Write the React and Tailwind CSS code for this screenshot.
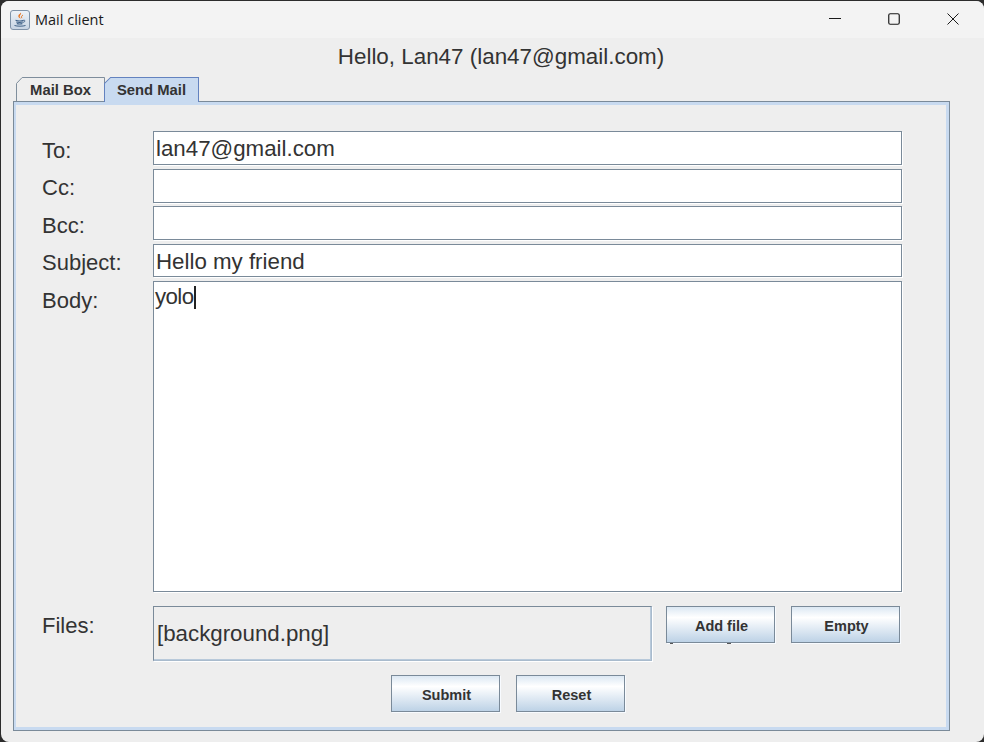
const textFont = "font-['Liberation_Sans',Arial,sans-serif]";

function JavaIcon() {
  return (
    <svg width="20" height="20" viewBox="0 0 20 20" className="shrink-0">
      <defs>
        <linearGradient id="tile" x1="0" y1="0" x2="0" y2="1">
          <stop offset="0" stopColor="#eef3f8" />
          <stop offset="1" stopColor="#c6d4e3" />
        </linearGradient>
      </defs>
      <rect x="0.5" y="0.5" width="19" height="19" rx="2.5" fill="url(#tile)" stroke="#7f93a8" />
      <path d="M10.8 2.500c1.300 1.800-1.700 2.800-.9 4.700.2.600.8 1.100 1.100 1.500-2.200-.8-3.200-2.100-2.500-3.500.5-1 2-1.500 2.300-2.700z" fill="#e8741f" />
      <path d="M13 5c-1.300.8-1.900 1.600-1.200 3.200" fill="none" stroke="#e8741f" strokeWidth="1" />
      <path d="M5.500 10.200c2 .7 6.500.7 8.300 0M6.200 12c1.800.5 5 .5 6.800 0M6.800 13.600c1.600.4 4.200.4 5.600 0" fill="none" stroke="#3f6288" strokeWidth="1.100" />
      <path d="M13.800 10.300c1.500-.3 1.700 1.500-.6 2M4.500 15.500c2.500.9 8.500.9 11 0" fill="none" stroke="#3f6288" strokeWidth="1" />
    </svg>
  );
}

function WindowButtons() {
  return (
    <div className="flex items-center mr-[2px] mb-[1px]">
      <div className="w-[59px] h-[36px] flex items-center justify-center">
        <svg width="12" height="12" viewBox="0 0 12 12"><path d="M0 5.500h12" stroke="#1a1a1a" strokeWidth="1" /></svg>
      </div>
      <div className="w-[59px] h-[36px] flex items-center justify-center">
        <svg width="12" height="12" viewBox="0 0 12 12"><rect x="0.750" y="0.750" width="10.500" height="10.500" rx="1.500" fill="none" stroke="#1a1a1a" strokeWidth="1.200" /></svg>
      </div>
      <div className="w-[59px] h-[36px] flex items-center justify-center">
        <svg width="12" height="12" viewBox="0 0 12 12"><path d="M0.500 0.500l11 11M11.500 0.500l-11 11" stroke="#1a1a1a" strokeWidth="1" /></svg>
      </div>
    </div>
  );
}

function Tab({ label, active, width }) {
  const fill = active ? "#c8daf0" : "#eeeeee";
  const stroke = active ? "#6382bf" : "#7a8a99";
  return (
    <div className={`relative h-[25px] flex items-center justify-center ${active ? "z-10 -ml-[1px]" : ""} ${width}`}>
      <svg className="absolute inset-0" width="100%" height="25" preserveAspectRatio="none" viewBox="0 0 94 25">
        <path d="M0.500 25V6.500L6.500 0.500H93.500V25" fill={fill} stroke={stroke} strokeWidth="1" />
      </svg>
      <span className={`relative text-[14.800px] font-bold text-[#333333] leading-none pt-[2px] ${textFont}`}>{label}</span>
    </div>
  );
}

function Field({ label, value, rowClass, labelClass, children }) {
  return (
    <div className={`flex ${rowClass}`}>
      <div className={`w-[112px] shrink-0 text-[#333333] text-[22px] leading-[38px] pl-[1px] ${labelClass}`}>{label}</div>
      <div className="w-[749px] h-full bg-white border border-[#7a8a99] shadow-[1px_1px_0_#ffffff] text-[22.300px] leading-[34px] text-[#333333] pl-[2px]">
        {value}
        {children}
      </div>
    </div>
  );
}

function JavaButton({ label }) {
  return (
    <button className="w-[109px] h-[37px] border border-[#7a8a99] shadow-[1px_1px_0_#f8fbff] bg-linear-to-b from-[#dce8f3] via-[#ffffff] via-30% to-[#bdd2e6] text-[14.500px] font-bold text-[#333333] pt-[4px] pl-[2px]">
      {label}
    </button>
  );
}

export default function App() {
  return (
    <div className={`w-[984px] h-[742px] bg-[#2c2c2c] overflow-hidden ${textFont}`}>
      <div className="w-[983px] h-[741px] ml-[1px] mt-[1px] rounded-lg overflow-hidden bg-[#eeeeee] flex flex-col">
        {/* Title bar */}
        <div className="h-[37px] shrink-0 bg-[#f3f3f3] flex items-center justify-between">
          <div className="flex items-center gap-[5px] pl-[9px]">
            <JavaIcon />
            <span className="text-[14.500px] text-[#1a1a1a] font-['Open_Sans',sans-serif]">Mail client</span>
          </div>
          <WindowButtons />
        </div>

        <div className="h-[39px] shrink-0 text-center text-[22.400px] leading-[37px] text-[#333333] pl-[17px]">
          Hello, Lan47 (lan47@gmail.com)
        </div>

        {/* Tabs */}
        <div className="flex pl-[15px] h-[25px] shrink-0">
          <Tab label="Mail Box" width="w-[89px]" />
          <Tab label="Send Mail" active width="w-[95px]" />
        </div>

        {/* Panel */}
        <div className="relative ml-[12px] -mt-[1px] w-[937px] h-[630px] border border-[#7a8a99]">
          <div className="absolute -top-[1px] left-[91px] w-[93px] h-[4px] bg-[#c8daf0] z-20" />
          <div className="h-full border-[3px] border-l-[2px] border-[#c8daf0] pt-[26px] pl-[25px]">
            <Field label="To:" value="lan47@gmail.com" rowClass="h-[34px]" labelClass="pt-[1px]" />
            <Field label="Cc:" rowClass="h-[34px] mt-[4px]" />
            <Field label="Bcc:" rowClass="h-[34px] mt-[3px]" labelClass="pt-[1px]" />
            <Field label="Subject:" value="Hello my friend" rowClass="h-[33px] mt-[4px]" />
            <Field label="Body:" rowClass="h-[311px] mt-[4px]" labelClass="pt-[1px]">
              <div className="-mt-[2px] -ml-[1px]">
                <span className="tracking-[-0.6px]">yolo</span>
                <span className="inline-block w-[2px] h-[23px] bg-[#222222] align-[-5px]" />
              </div>
            </Field>

            {/* Files */}
            <div className="flex h-[55px] mt-[14px]">
              <div className="w-[112px] shrink-0 text-[#333333] text-[22px] leading-[40px] pl-[1px]">Files:</div>
              <div className="w-[499px] h-full border border-[#7a8a99] border-r-[#a9bbcd] border-b-[#a9bbcd] shadow-[inset_-1px_-1px_0_#b8c9da,1px_1px_0_#ffffff] text-[22.300px] leading-[54px] text-[#333333] pl-[3px]">
                [background.png]
              </div>
              <div className="relative ml-[14px]">
                <JavaButton label="Add file" />
                <span className="absolute left-[4px] top-[37px] w-[3px] h-[1px] bg-[#555555]" />
                <span className="absolute left-[61px] top-[37px] w-[4px] h-[1px] bg-[#555555]" />
              </div>
              <div className="ml-[16px]">
                <JavaButton label="Empty" />
              </div>
            </div>

            <div className="flex gap-[16px] mt-[14px] pl-[350px]">
              <JavaButton label="Submit" />
              <JavaButton label="Reset" />
            </div>
          </div>
        </div>
      </div>
    </div>
  );
}
